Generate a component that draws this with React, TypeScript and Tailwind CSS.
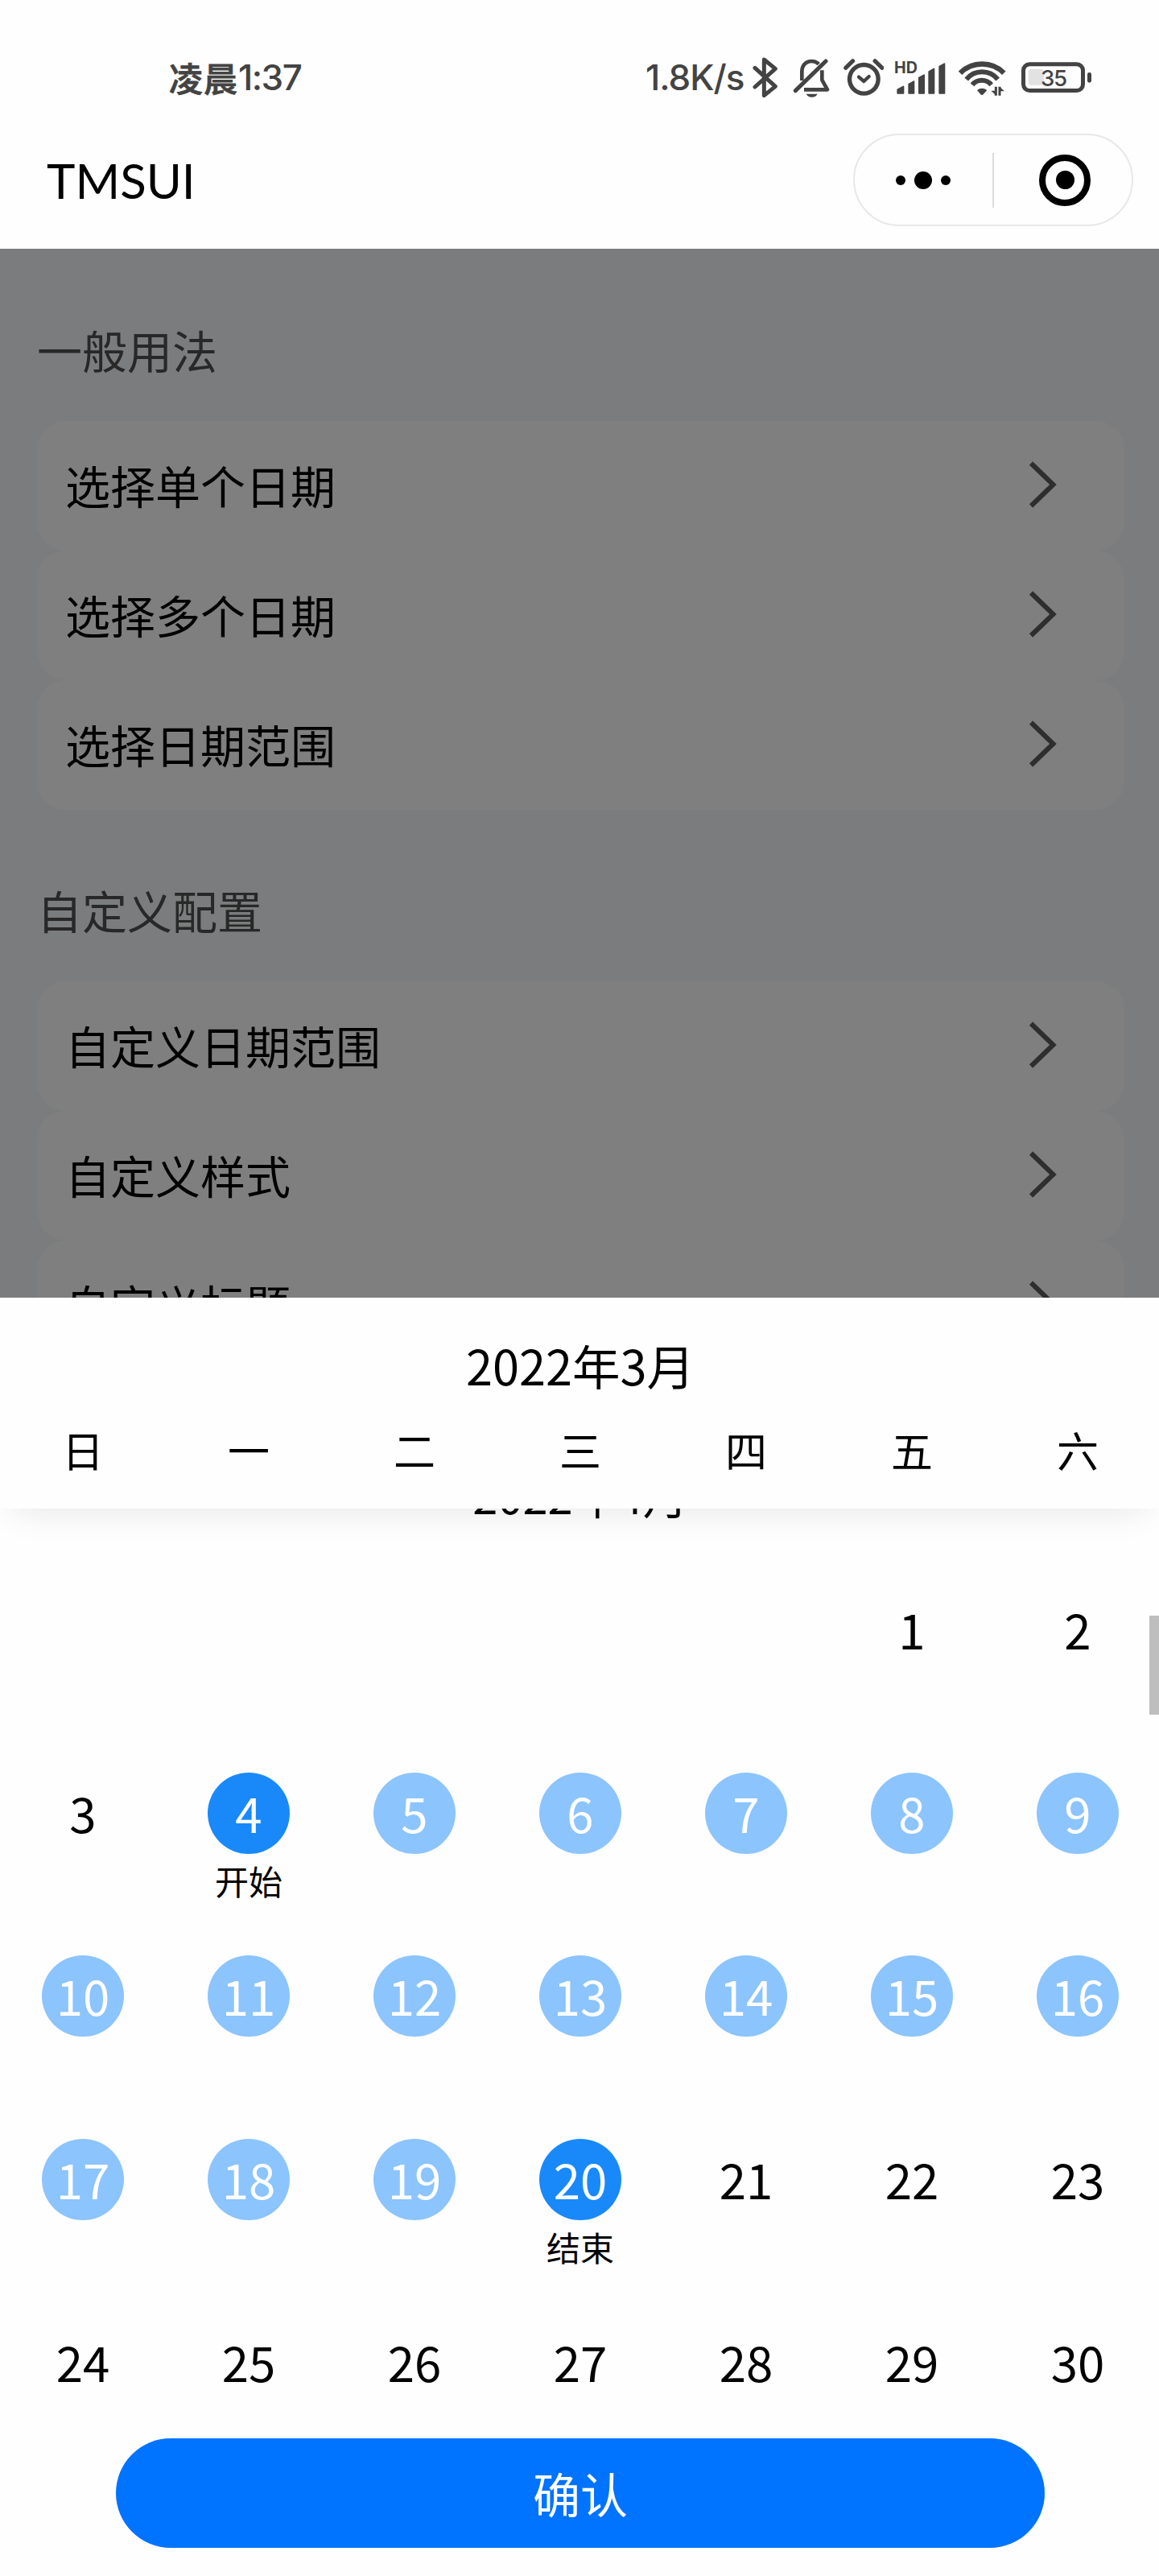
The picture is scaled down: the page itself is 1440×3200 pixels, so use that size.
import type { ReactNode } from "react";
import { clsx } from "clsx";

const GENERAL = ["选择单个日期", "选择多个日期", "选择日期范围"];
const CUSTOM = ["自定义日期范围", "自定义样式", "自定义标题"];
const WEEKDAYS = ["日", "一", "二", "三", "四", "五", "六"];

const RANGE_START = 4;
const RANGE_END = 20;
const FIRST_WEEKDAY = 5; // April 2022 starts on a Friday

// leading blanks, then day numbers
const CELLS: (number | null)[] = [
  ...Array.from({ length: FIRST_WEEKDAY }, () => null),
  ...Array.from({ length: 30 }, (_, i) => i + 1),
];

// Status icons share a 52px tall box, drawn at 3 units per pixel
function StatusIcon({ units, className, children }: { units: number; className?: string; children: ReactNode }) {
  return (
    <svg
      width={units / 3}
      height={52}
      viewBox={`0 0 ${units} 156`}
      fill="none"
      stroke="#434343"
      className={clsx("block shrink-0", className)}
    >
      {children}
    </svg>
  );
}

function StatusBar() {
  return (
    <div className="flex h-[122px] items-end text-[#434343]">
      <div className="ml-[210px] flex h-[52px] w-[592px] items-center font-medium whitespace-nowrap">
        <span className="text-[42px] leading-[52px] tracking-[1px] [-webkit-text-stroke:0.8px_#434343]">凌晨</span>
        <span className="font-['Inter'] text-[44px] leading-[52px] tracking-[-1.5px]">1:37</span>
      </div>
      <div className="h-[52px] w-[133px] font-['Inter'] text-[44px] leading-[52px] font-medium tracking-[-1px] whitespace-nowrap">
        1.8K/s
      </div>
      <StatusIcon units={96}>
        <path d="M9 43L85 112L43 146V12L85 46L9 114" strokeWidth="15" strokeLinecap="round" strokeLinejoin="round" />
      </StatusIcon>
      <StatusIcon units={140} className="ml-[18px]">
        <path d="M10 128L123 18" strokeWidth="15" strokeLinecap="round" />
        <path d="M34 90V58C34 32 50 18 70 18C82 18 90 22 97 29" strokeWidth="14" />
        <path d="M109 52V88L129 124H42" strokeWidth="14" strokeLinejoin="round" />
        <path d="M50 140H92Q86 152 71 152Q56 152 50 140Z" fill="#434343" stroke="none" />
      </StatusIcon>
      <StatusIcon units={152} className="ml-[16px]">
        <circle cx="76" cy="85" r="53.5" strokeWidth="16" />
        <path d="M57 77L76 93L95 75" strokeWidth="13" strokeLinecap="round" strokeLinejoin="round" />
        <path d="M8 43L35 17M117 17L144 43" strokeWidth="15" strokeLinecap="round" />
      </StatusIcon>
      <StatusIcon units={192} className="ml-[13px]">
        <text x="0" y="64" fill="#434343" stroke="none" fontFamily="Inter" fontWeight="700" fontSize="59">
          HD
        </text>
        <path
          d="M13 137V124L34 113V137ZM55 137V104L73 94V137ZM93 137V80L111 70V137ZM130 137V57L148 47V137ZM169 137V38L187 28V137Z"
          fill="#434343"
          strokeWidth="6"
          strokeLinejoin="round"
        />
      </StatusIcon>
      <StatusIcon units={175} className="ml-[16px]">
        <path d="M6 62A116 116 0 0 1 169 62" strokeWidth="19" />
        <path d="M29 86A75 75 0 0 1 146 86" strokeWidth="18" />
        <path d="M51 106A46 46 0 0 1 122 106" strokeWidth="18" />
        <path d="M69 126Q87 112 106 126L92 142Q87 146 82 142Z" fill="#434343" stroke="none" />
        <path d="M139 113V146M153 146V113" strokeWidth="9" />
        <path d="M121 128H139V145ZM171 130H153V113Z" fill="#434343" stroke="none" />
      </StatusIcon>
      <StatusIcon units={261} className="ml-[19px]">
        <rect x="7.5" y="29.5" width="222" height="98" rx="23" strokeWidth="15" />
        <rect x="26" y="47" width="58" height="60" rx="11" fill="#e2e2e2" stroke="none" />
        <text x="72" y="110" fill="#434343" stroke="none" fontFamily="Inter" fontWeight="500" fontSize="83" letterSpacing="-4">
          35
        </text>
        <rect x="246" y="60" width="15" height="38" rx="7" fill="#434343" stroke="none" />
      </StatusIcon>
    </div>
  );
}

function NavBar() {
  return (
    <div className="flex h-[187px] items-start justify-between pt-[44px] pr-[32px] pl-[58px]">
      <h1 className="font-['Lato'] text-[60px] leading-[116px] text-black">TMSUI</h1>
      <div className="flex h-[115px] w-[348px] items-center rounded-full border-2 border-[#e8e8e8]">
        <div className="flex w-[171px] items-center justify-center gap-[11px] pr-[2px]">
          <span className="size-[12px] rounded-full bg-black" />
          <span className="size-[22px] rounded-full bg-black" />
          <span className="size-[12px] rounded-full bg-black" />
        </div>
        <div className="h-[68px] w-[2px] bg-[#dcdcdc]" />
        <div className="flex flex-1 items-center justify-center pl-[5px]">
          <span className="flex size-[64px] items-center justify-center rounded-full border-[8px] border-black">
            <span className="size-[23px] rounded-full bg-black" />
          </span>
        </div>
      </div>
    </div>
  );
}

function CellGroup({ title, items }: { title: string; items: string[] }) {
  return (
    <section>
      <h2 className="text-[56px] leading-[80px] text-[#505050]">{title}</h2>
      <ul className="mt-[49px]">
        {items.map((item) => (
          <li
            key={item}
            className="flex h-[161px] items-center justify-between rounded-[36px] bg-white pr-[84px] pb-[3px] pl-[35px] text-[56px] text-black"
          >
            {item}
            <svg width="36" height="60" viewBox="0 0 36 60" fill="none" stroke="#5c5c5c" strokeWidth="6">
              <path d="M4 3.5L31.5 30L4 56.5" />
            </svg>
          </li>
        ))}
      </ul>
    </section>
  );
}

function Day({ day }: { day: number | null }) {
  if (day === null) return <div />;
  const isEdge = day === RANGE_START || day === RANGE_END;
  const inRange = day > RANGE_START && day < RANGE_END;
  return (
    <div className="flex flex-col items-center">
      <div
        className={clsx(
          "flex h-[101px] w-[102px] items-center justify-center rounded-[50%] pb-[3px] text-[60px] leading-[98px]",
          isEdge && "bg-[#1989fa] text-white",
          inRange && "bg-[#8cc4fd] text-white",
          !isEdge && !inRange && "text-black"
        )}
      >
        {day}
      </div>
      {isEdge && (
        <div className="mt-[3px] text-[42px] leading-[60px] text-black">{day === RANGE_START ? "开始" : "结束"}</div>
      )}
    </div>
  );
}

export default function App() {
  return (
    <div className="flex h-[3200px] w-[1440px] flex-col overflow-hidden bg-[#fefefe] font-['Noto_Sans_CJK_SC',sans-serif]">
      <StatusBar />
      <NavBar />

      <main className="relative h-[1303px] shrink-0 overflow-hidden bg-[#f7f8fa] pt-[85px] pr-[43px] pl-[46px]">
        <CellGroup title="一般用法" items={GENERAL} />
        <div className="h-[84px]" />
        <CellGroup title="自定义配置" items={CUSTOM} />
        <div className="absolute inset-0 bg-black/50" />
      </main>

      <div className="relative z-10 h-[262px] shrink-0 bg-[#fefefe] shadow-[0_20px_40px_-16px_rgba(0,0,0,0.09)]">
        <div className="pt-[39px] pl-[2px] text-center text-[59.5px] leading-[88px] text-black">2022年3月</div>
        <div className="mt-[24px] grid grid-cols-[repeat(7,206px)] text-center text-[52px] leading-[76px] text-black">
          {WEEKDAYS.map((d) => (
            <div key={d}>{d}</div>
          ))}
        </div>
      </div>

      <div className="relative h-[1155px] shrink-0 overflow-hidden">
        <div className="-mt-[58px] h-[158px] pl-[2px] text-center text-[56px] leading-[82px] text-black">2022年4月</div>
        <div className="grid auto-rows-[227.5px] grid-cols-[repeat(7,206px)]">
          {CELLS.map((day, i) => (
            <Day key={i} day={day} />
          ))}
        </div>
        <div className="absolute top-[133px] right-0 h-[123px] w-[12px] bg-[#bebebe]" />
      </div>

      <button className="ml-[144px] h-[136px] w-[1154px] shrink-0 rounded-full bg-[#0073ff] text-[59px] leading-[136px] text-white">
        确认
      </button>
    </div>
  );
}
